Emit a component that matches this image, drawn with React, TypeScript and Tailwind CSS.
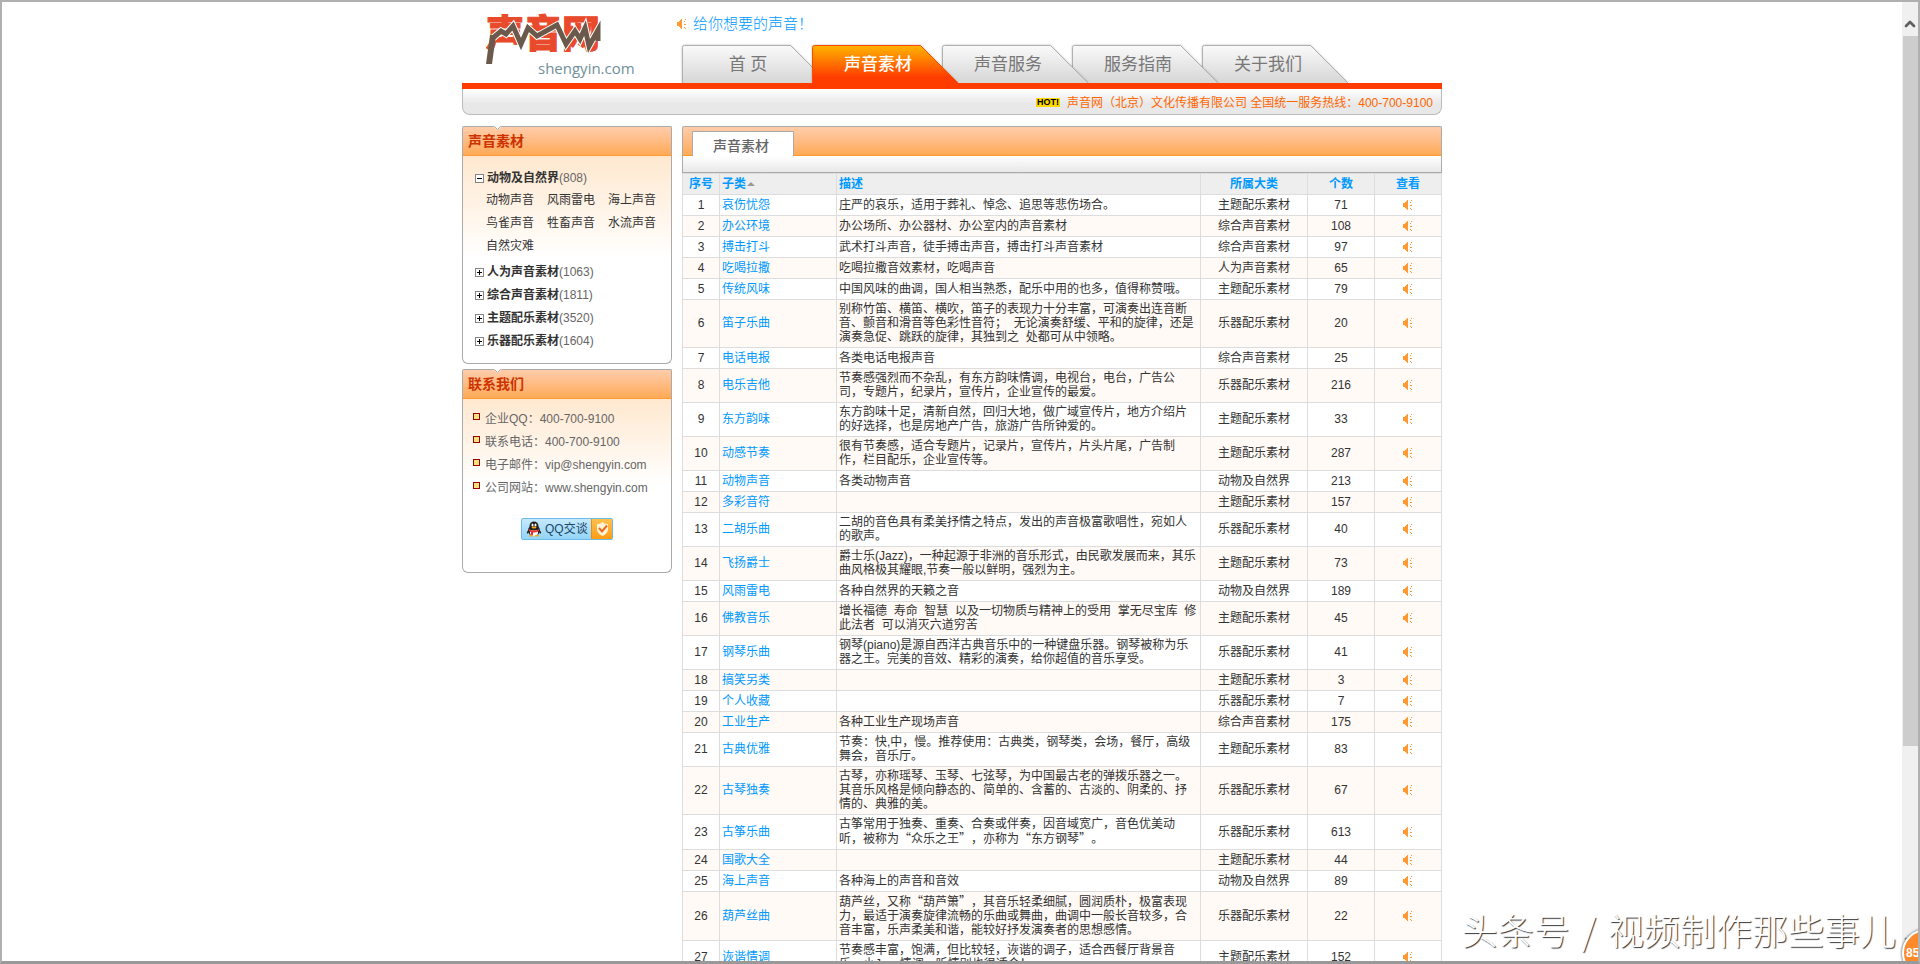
import clsx from 'clsx'
import { ChevronDown, ChevronUp } from 'lucide-react'

type Sound = [name: string, description: string, category: string, count: number]

const navItems = ['首 页', '声音素材', '声音服务', '服务指南', '关于我们']
const navLayers = ['z-[4]', 'z-[5]', 'z-[3]', 'z-[2]', 'z-[1]']

const subCategories = ['动物声音', '风雨雷电', '海上声音', '鸟雀声音', '牲畜声音', '水流声音', '自然灾难']

const categories = [
  { name: '人为声音素材', count: 1063 },
  { name: '综合声音素材', count: 1811 },
  { name: '主题配乐素材', count: 3520 },
  { name: '乐器配乐素材', count: 1604 },
]

const contacts = [
  { label: '企业QQ：', value: '400-700-9100' },
  { label: '联系电话：', value: '400-700-9100' },
  { label: '电子邮件：', value: 'vip@shengyin.com' },
  { label: '公司网站：', value: 'www.shengyin.com' },
]

const sounds: Sound[] = [
  ['哀伤忧怨', '庄严的哀乐，适用于葬礼、悼念、追思等悲伤场合。', '主题配乐素材', 71],
  ['办公环境', '办公场所、办公器材、办公室内的声音素材', '综合声音素材', 108],
  ['搏击打斗', '武术打斗声音，徒手搏击声音，搏击打斗声音素材', '综合声音素材', 97],
  ['吃喝拉撒', '吃喝拉撒音效素材，吃喝声音', '人为声音素材', 65],
  ['传统风味', '中国风味的曲调，国人相当熟悉，配乐中用的也多，值得称赞哦。', '主题配乐素材', 79],
  [
    '笛子乐曲',
    '别称竹笛、横笛、横吹，笛子的表现力十分丰富，可演奏出连音断音、颤音和滑音等色彩性音符；\u00a0 无论演奏舒缓、平和的旋律，还是演奏急促、跳跃的旋律，其独到之\u00a0 处都可从中领略。',
    '乐器配乐素材',
    20,
  ],
  ['电话电报', '各类电话电报声音', '综合声音素材', 25],
  ['电乐吉他', '节奏感强烈而不杂乱，有东方韵味情调，电视台，电台，广告公司，专题片，纪录片，宣传片，企业宣传的最爱。', '乐器配乐素材', 216],
  ['东方韵味', '东方韵味十足，清新自然，回归大地，做广域宣传片，地方介绍片的好选择，也是房地产广告，旅游广告所钟爱的。', '主题配乐素材', 33],
  ['动感节奏', '很有节奏感，适合专题片，记录片，宣传片，片头片尾，广告制作，栏目配乐，企业宣传等。', '主题配乐素材', 287],
  ['动物声音', '各类动物声音', '动物及自然界', 213],
  ['多彩音符', '', '主题配乐素材', 157],
  ['二胡乐曲', '二胡的音色具有柔美抒情之特点，发出的声音极富歌唱性，宛如人的歌声。', '乐器配乐素材', 40],
  ['飞扬爵士', '爵士乐(Jazz)，一种起源于非洲的音乐形式，由民歌发展而来，其乐曲风格极其耀眼,节奏一般以鲜明，强烈为主。', '主题配乐素材', 73],
  ['风雨雷电', '各种自然界的天籁之音', '动物及自然界', 189],
  ['佛教音乐', '增长福德\u00a0 寿命\u00a0 智慧\u00a0 以及一切物质与精神上的受用\u00a0 掌无尽宝库\u00a0 修此法者\u00a0 可以消灭六道穷苦', '主题配乐素材', 45],
  ['钢琴乐曲', '钢琴(piano)是源自西洋古典音乐中的一种键盘乐器。钢琴被称为乐器之王。完美的音效、精彩的演奏，给你超值的音乐享受。', '乐器配乐素材', 41],
  ['搞笑另类', '', '主题配乐素材', 3],
  ['个人收藏', '', '乐器配乐素材', 7],
  ['工业生产', '各种工业生产现场声音', '综合声音素材', 175],
  ['古典优雅', '节奏：快,中，慢。推荐使用：古典类，钢琴类，会场，餐厅，高级舞会，音乐厅。', '主题配乐素材', 83],
  [
    '古琴独奏',
    '古琴，亦称瑶琴、玉琴、七弦琴，为中国最古老的弹拨乐器之一。其音乐风格是倾向静态的、简单的、含蓄的、古淡的、阴柔的、抒情的、典雅的美。',
    '乐器配乐素材',
    67,
  ],
  ['古筝乐曲', '古筝常用于独奏、重奏、合奏或伴奏，因音域宽广，音色优美动听，被称为“众乐之王”，亦称为“东方钢琴”。', '乐器配乐素材', 613],
  ['国歌大全', '', '主题配乐素材', 44],
  ['海上声音', '各种海上的声音和音效', '动物及自然界', 89],
  [
    '葫芦丝曲',
    '葫芦丝，又称“葫芦箫”，其音乐轻柔细腻，圆润质朴，极富表现力，最适于演奏旋律流畅的乐曲或舞曲，曲调中一般长音较多，合音丰富，乐声柔美和谐，能较好抒发演奏者的思想感情。',
    '乐器配乐素材',
    22,
  ],
  ['诙谐情调', '节奏感丰富，饱满，但比较轻，诙谐的调子，适合西餐厅背景音乐，小Jazz情调，听情别也很适合！', '主题配乐素材', 152],
]

function Speaker() {
  return (
    <svg width="10" height="12" viewBox="0 0 10 12" fill="#ff9933" shapeRendering="crispEdges" aria-hidden="true">
      <path d="M0 4h2V3h1V2h1V1h1v10H4v-1H3V9H2V8H0z" />
      <path d="M7 3h1v1H7zM8 1h1v1H8zM7 6h2v1H7zM7 9h1v1H7zM8 10h1v1H8z" />
    </svg>
  )
}

function Logo() {
  return (
    <svg width="160" height="70" viewBox="0 0 160 70" role="img" aria-label="声音网">
      <text
        x="0"
        y="35"
        fill="#e84a2b"
        stroke="#e84a2b"
        strokeWidth="1"
        fontSize="38"
        fontWeight="900"
        fontFamily="'Noto Sans CJK SC', sans-serif"
      >
        声音网
      </text>
      <path
        d="m7 26 8-7 5 3 7-8 8 18 7-16 9 8 20-11 9 19 9-13 5 8 5-11 4 18 9-16v11"
        fill="none"
        stroke="#fff"
        strokeWidth="7"
      />
      <path
        d="m7 26 8-7 5 3 7-8 8 18 7-16 9 8 20-11 9 19 9-13 5 8 5-11 4 18 9-16v11"
        fill="none"
        stroke="#6b5a4b"
        strokeWidth="5"
      />
      <path d="M4 23h6L6 52H0z" fill="#6b5a4b" />
      <text x="52" y="62" fill="#718f98" fontSize="15" fontFamily="'Open Sans', 'Noto Sans', sans-serif">
        shengyin.com
      </text>
    </svg>
  )
}

function NavTab({ label, layer, active }: { label: string; layer: string; active: boolean }) {
  const id = active ? 'tabActive' : 'tabIdle'
  return (
    <li className={clsx('relative w-[130px]', layer)}>
      <svg className="absolute top-0 left-0 drop-shadow-[0_0_1px_rgba(0,0,0,0.25)]" width="150" height="38" viewBox="0 0 150 38" aria-hidden="true">
        <defs>
          <linearGradient id="tabIdle" x1="0" y1="0" x2="0" y2="1">
            <stop offset="0" stopColor="#fafafa" />
            <stop offset="1" stopColor="#d6d6d6" />
          </linearGradient>
          <linearGradient id="tabActive" x1="0" y1="0" x2="0" y2="1">
            <stop offset="0" stopColor="#ffb400" />
            <stop offset="0.85" stopColor="#ff3c00" />
          </linearGradient>
        </defs>
        <path
          d="M.5 38V2.500Q.5.5 2.500.5H108.500L146 38"
          fill={`url(#${id})`}
          stroke={active ? '#ff4a00' : '#b0b0b0'}
        />
      </svg>
      <a
        href="#"
        className={clsx(
          'relative flex h-[38px] w-[132px] items-center justify-center pt-[3px] text-[17px]',
          active ? 'font-medium text-white' : 'text-[#777]',
        )}
      >
        {label}
      </a>
    </li>
  )
}

function PanelTitle({ children }: { children: string }) {
  return (
    <div className="relative h-[30px] rounded-t-[2px] border border-[#aaa] border-b-[#ff9933] bg-linear-to-b from-[#ffccaa] to-[#ffaa55] px-[5px]">
      <svg className="absolute -top-px left-[30px]" width="9" height="4" viewBox="0 0 9 4" aria-hidden="true">
        <path d="M0 0h9L4.500 4z" fill="#fff" />
        <path d="M.5.500h1l3 3 3-3h1" fill="none" stroke="#aaa" />
      </svg>
      <h2 className="text-[14px] leading-[28px] font-bold text-[#cc3300]">{children}</h2>
    </div>
  )
}

function Toggle({ open, name }: { open?: boolean; name: string }) {
  return (
    <button aria-label={name} aria-expanded={!!open} className="size-[9px] shrink-0 bg-white">
      <svg width="9" height="9" viewBox="0 0 9 9" shapeRendering="crispEdges" aria-hidden="true">
        <path d="M0 0h9v9H0zM1 1v7h7V1z" fill="#848484" fillRule="evenodd" />
        <path d={open ? 'M2 4h5v1H2z' : 'M2 4h5v1H2zM4 2h1v5H4z'} fill="#000" />
      </svg>
    </button>
  )
}

function QQButton() {
  return (
    <button className="flex h-[22px] w-[92px] overflow-hidden rounded-[2px] border border-[#6bbce8] bg-linear-to-b from-[#c4e9fd] to-[#93d4f8]">
      <span className="flex flex-1 items-center gap-[3px] pl-1">
        <svg width="16" height="16" viewBox="0 0 16 16" className="shrink-0" aria-hidden="true">
          <ellipse cx="8" cy="9.500" rx="6" ry="5.500" fill="#222" />
          <path d="M2.500 9Q0 11 1 13l2-2zM13.500 9q2.500 2 1.500 4l-2-2z" fill="#222" />
          <ellipse cx="8" cy="11.500" rx="4" ry="3.500" fill="#fff" />
          <ellipse cx="8" cy="5" rx="4.500" ry="4.500" fill="#222" />
          <ellipse cx="6.500" cy="4" rx="1" ry="1.500" fill="#fff" />
          <ellipse cx="9.500" cy="4" rx="1" ry="1.500" fill="#fff" />
          <ellipse cx="8" cy="6.500" rx="2.500" ry="1" fill="#f9a11b" />
          <path d="M3 8q5 3 10 0v2q-4 2-6 1.500V14H5v-3L3 10z" fill="#e5302c" />
          <path d="M3 14.500q2-1.500 4 0v1H3zM9 14.500q2-1.500 4 0v1H9z" fill="#f9a11b" />
        </svg>
        <span className="text-xs leading-5 whitespace-nowrap text-[#1b4764]">QQ交谈</span>
      </span>
      <span className="flex w-[21px] items-center justify-center border-l border-[#f08c0e] bg-linear-to-b from-[#ffc04a] to-[#ff9b0f]">
        <svg width="13" height="14" viewBox="0 0 13 14" aria-hidden="true">
          <path d="M1 2q3 .5 5.500-2Q9 2.500 12 2v6q-1 4-5.500 6Q2 12 1 8z" fill="#fff3d6" />
          <path d="m3 6 3 3.500 5-6" fill="none" stroke="#ee6a1c" strokeWidth="2" />
        </svg>
      </span>
    </button>
  )
}

function Header() {
  return (
    <header>
      <div className="flex h-[81px]">
        <div className="w-[215px] pt-2.5 pl-6">
          <Logo />
        </div>
        <div className="flex flex-1 flex-col justify-between">
          <p className="flex items-center gap-1.5 pt-3 text-[15px] leading-5 font-light text-[#0099ff]">
            <Speaker />
            给你想要的声音！
          </p>
          <nav className="pl-[5px]">
            <ul className="flex">
              {navItems.map((label, i) => (
                <NavTab key={label} label={label} layer={navLayers[i]} active={i === 1} />
              ))}
            </ul>
          </nav>
        </div>
      </div>
      <div className="relative z-10 h-1.5 bg-[#ff3c00]" />
      <div className="flex h-[26px] items-center justify-end gap-[7px] rounded-b-lg border border-t-0 border-[#bbb] bg-linear-to-b from-white to-[#e8e8e8] to-60% pt-0.5 pr-2 text-[#ff6600]">
        <span className="bg-[#ffd800] px-px text-[9px] leading-[9px] font-bold text-black">HOT!</span>
        <span>声音网（北京）文化传播有限公司 全国统一服务热线：400-700-9100</span>
      </div>
    </header>
  )
}

function Sidebar() {
  return (
    <aside className="flex w-[210px] shrink-0 flex-col gap-[5px]">
      <section>
        <PanelTitle>声音素材</PanelTitle>
        <div className="rounded-b-md border border-t-0 border-[#aaa] bg-linear-to-b from-[#ffe8cf] to-white to-50% px-3 pt-[11px] pb-2.5 leading-[23px]">
          <div className="flex items-center gap-[3px]">
            <Toggle open name="动物及自然界" />
            <span className="text-[#666]">
              <a href="#" className="font-bold text-[#333]">动物及自然界</a>(808)
            </span>
          </div>
          <ul className="-mt-px mb-[3px] grid grid-cols-[61px_61px_61px] pl-[11px]">
            {subCategories.map((name) => (
              <li key={name}>
                <a href="#">{name}</a>
              </li>
            ))}
          </ul>
          {categories.map(({ name, count }) => (
            <div key={name} className="flex items-center gap-[3px]">
              <Toggle name={name} />
              <span className="text-[#666]">
                <a href="#" className="font-bold text-[#333]">{name}</a>({count})
              </span>
            </div>
          ))}
        </div>
      </section>

      <section>
        <PanelTitle>联系我们</PanelTitle>
        <div className="rounded-b-md border border-t-0 border-[#aaa] bg-linear-to-b from-[#ffe8cf] to-white to-50% pt-[9px] pb-8 leading-[23px] text-[#666]">
          <ul className="px-2.5">
            {contacts.map(({ label, value }) => (
              <li key={label} className="flex items-start gap-[5px]">
                <span className="mt-[5px] size-[7px] border border-[#990000] bg-[#f6e27a]" />
                <span>
                  {label}
                  {value}
                </span>
              </li>
            ))}
          </ul>
          <div className="flex justify-center pt-[18px]">
            <QQButton />
          </div>
        </div>
      </section>
    </aside>
  )
}

// curly quotes take a full cell like the rest of the punctuation
function Description({ text }: { text: string }) {
  return text.split(/([“”])/).map((part, i) =>
    i % 2 ? (
      <span key={i} className="font-['Noto_Sans_CJK_SC']">
        {part}
      </span>
    ) : (
      part
    ),
  )
}

function SoundTable() {
  return (
    <table className="w-full table-fixed border-collapse text-center leading-[14px]">
      <colgroup>
        <col className="w-[37px]" />
        <col className="w-[117px]" />
        <col />
        <col className="w-[107px]" />
        <col className="w-[67px]" />
        <col className="w-[67px]" />
      </colgroup>
      <thead>
        <tr className="h-[21px] bg-[#eee] text-[#0099ff] *:border *:border-[#ddd] *:px-0.5 *:py-0">
          <th>序号</th>
          <th className="text-left">
            <button className="flex items-center gap-px font-bold">
              子类
              <svg width="8" height="4" viewBox="0 0 8 4" fill="#999" aria-hidden="true">
                <path d="M4 0l4 4H0z" />
              </svg>
            </button>
          </th>
          <th className="text-left">描述</th>
          <th>所属大类</th>
          <th>个数</th>
          <th>查看</th>
        </tr>
      </thead>
      <tbody>
        {sounds.map(([name, description, category, count], i) => (
          <tr key={name} className="h-[21px] even:bg-[#fffaf6] *:border *:border-[#ddd] *:px-0.5 *:pt-0.5 *:pb-[3px]">
            <td>{i + 1}</td>
            <td className="text-left">
              <a href="#" className="text-[#0099ff]">{name}</a>
            </td>
            <td className="text-left">
              <Description text={description} />
            </td>
            <td>{category}</td>
            <td>{count}</td>
            <td>
              <a href="#" aria-label={name} className="flex justify-center">
                <Speaker />
              </a>
            </td>
          </tr>
        ))}
      </tbody>
    </table>
  )
}

export default function App() {
  return (
    <div
      lang="zh-CN"
      className="relative flex h-screen overflow-hidden border-2 border-b-[3px] border-[#b0b0b0] border-b-[#999] bg-white font-['Liberation_Sans','Noto_Sans_CJK_SC',sans-serif] text-xs text-[#333] [text-spacing-trim:space-all]"
    >
      <div className="flex-1 overflow-hidden">
        <div className="mx-auto w-full max-w-[980px]">
          <Header />
          <div className="mt-[11px] flex items-start gap-2.5">
            <Sidebar />
            <main className="min-w-0 flex-1">
              <div className="flex h-[30px] items-end rounded-t-[2px] border border-[#aaa] border-b-[#ff9933] bg-linear-to-b from-[#ffccaa] to-[#ffaa55] pl-[9px]">
                <h1 className="-mb-px flex h-[25px] w-[102px] items-center justify-center border border-b-0 border-[#aaa] bg-white pt-1 pr-1 text-[14px] font-medium text-[#666]">
                  声音素材
                </h1>
              </div>
              <div className="h-[17px] border border-t-0 border-[#aaa] bg-linear-to-b from-white to-[#e8e8e8]" />
              <SoundTable />
            </main>
          </div>
        </div>
      </div>

      <div className="flex w-4 shrink-0 flex-col items-center bg-[#f0f0f0] text-[#606060]">
        <div className="flex h-[34px] items-center pt-2.5">
          <ChevronUp size={16} strokeWidth={4} />
        </div>
        <div className="h-[74%] w-[15px] bg-[#cdcdcd]" />
        <ChevronDown size={16} strokeWidth={4} className="mt-auto mb-3" />
      </div>

      <p className="absolute right-[22px] bottom-0 font-['Noto_Sans_CJK_SC'] text-4xl leading-[64px] font-light whitespace-pre text-white [text-shadow:1px_1px_1px_#333]">
        头条号<span className="px-1"> / </span>视频制作那些事儿
      </p>
      <button className="absolute -right-8 -bottom-4 flex size-12 items-center rounded-full border-2 border-white bg-[#ff8a2b] pl-0.5 text-xs font-bold text-white shadow-[0_0_2px_1px_#999]">
        85
      </button>
    </div>
  )
}
